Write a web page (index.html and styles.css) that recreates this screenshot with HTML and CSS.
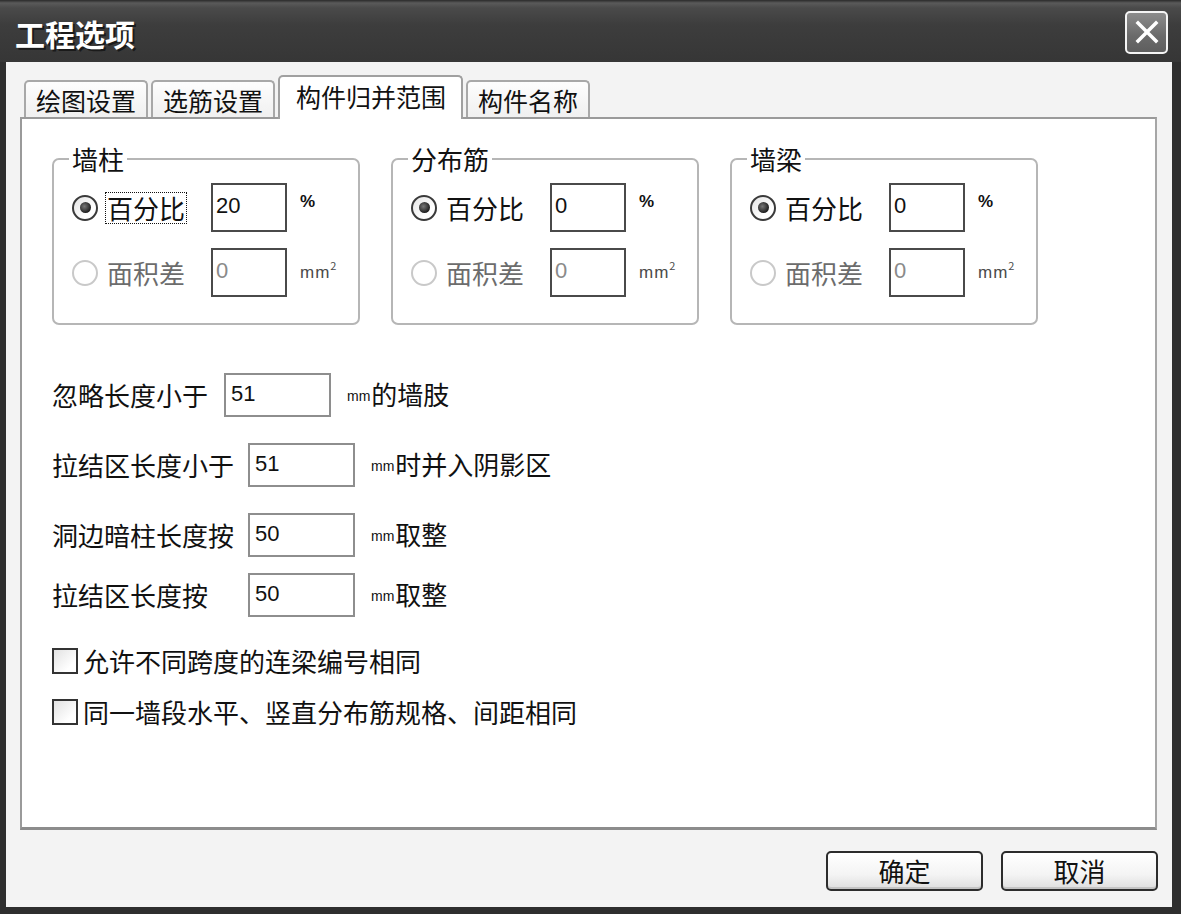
FILE: index.html
```html
<!DOCTYPE html>
<html lang="zh-CN">
<head>
  <meta charset="UTF-8" />
  <title>工程选项</title>
  <link rel="stylesheet" href="styles.css">
</head>
<body>

<div class="window">
  <!-- title bar -->
  <div class="titlebar">
    <span class="title">工程选项</span>
    <button class="close" title="关闭">
      <svg width="26" height="26" viewBox="0 0 26 26">
        <path d="M4 4 L22 22 M22 4 L4 22" stroke="#fff" stroke-width="3.5" stroke-linecap="square" fill="none" />
      </svg>
    </button>
  </div>

  <div class="client">
    <div class="tabs">
      <div class="tab">绘图设置</div>
      <div class="tab">选筋设置</div>
      <div class="tab active">构件归并范围</div>
      <div class="tab">构件名称</div>
    </div>

    <div class="panel">
      <div class="groups">
        <fieldset class="group">
          <legend>墙柱</legend>
          <div class="opt">
            <span class="radio checked"></span>
            <span class="opt-label"><span class="focus">百分比</span></span>
            <input class="field" type="text" value="20" readonly>
            <span class="unit pct">%</span>
          </div>
          <div class="opt disabled">
            <span class="radio"></span>
            <span class="opt-label">面积差</span>
            <input class="field" type="text" value="0" readonly>
            <span class="unit area">mm<sup>2</sup></span>
          </div>
        </fieldset>

        <fieldset class="group">
          <legend>分布筋</legend>
          <div class="opt">
            <span class="radio checked"></span>
            <span class="opt-label">百分比</span>
            <input class="field" type="text" value="0" readonly>
            <span class="unit pct">%</span>
          </div>
          <div class="opt disabled">
            <span class="radio"></span>
            <span class="opt-label">面积差</span>
            <input class="field" type="text" value="0" readonly>
            <span class="unit area">mm<sup>2</sup></span>
          </div>
        </fieldset>

        <fieldset class="group">
          <legend>墙梁</legend>
          <div class="opt">
            <span class="radio checked"></span>
            <span class="opt-label">百分比</span>
            <input class="field" type="text" value="0" readonly>
            <span class="unit pct">%</span>
          </div>
          <div class="opt disabled">
            <span class="radio"></span>
            <span class="opt-label">面积差</span>
            <input class="field" type="text" value="0" readonly>
            <span class="unit area">mm<sup>2</sup></span>
          </div>
        </fieldset>
      </div>

      <div class="limits">
        <div class="limit short">
          <span class="limit-label">忽略长度小于</span>
          <input class="box" type="text" value="51" readonly>
          <span class="limit-unit"><small>mm</small>的墙肢</span>
        </div>
        <div class="limit">
          <span class="limit-label">拉结区长度小于</span>
          <input class="box" type="text" value="51" readonly>
          <span class="limit-unit"><small>mm</small>时并入阴影区</span>
        </div>
        <div class="limit">
          <span class="limit-label">洞边暗柱长度按</span>
          <input class="box" type="text" value="50" readonly>
          <span class="limit-unit"><small>mm</small>取整</span>
        </div>
        <div class="limit tight">
          <span class="limit-label">拉结区长度按</span>
          <input class="box" type="text" value="50" readonly>
          <span class="limit-unit"><small>mm</small>取整</span>
        </div>
      </div>

      <div class="checks">
        <label class="check"><span class="checkbox"></span>允许不同跨度的连梁编号相同</label>
        <label class="check"><span class="checkbox"></span>同一墙段水平、竖直分布筋规格、间距相同</label>
      </div>
    </div>

    <div class="actions">
      <button class="btn">确定</button>
      <button class="btn">取消</button>
    </div>
  </div>
</div>

</body>
</html>
```

FILE: styles.css
```css
:root {
  --frame: #2e2e2e;
  --face: #f3f3f3;
  --text: #111111;
  --muted: #6c6c6c;
  --edge: #9a9a9a;
}

* {
  box-sizing: border-box;
  margin: 0;
  padding: 0;
  font-family: "Noto Sans CJK SC", "Noto Sans", sans-serif;
}

body {
  background: var(--frame);
  color: var(--text);
}

.window {
  width: 1181px;
  height: 914px;
  display: flex;
  flex-direction: column;
  background: var(--frame);
}

/* title bar */
.titlebar {
  height: 62px;
  flex: none;
  display: flex;
  align-items: center;
  justify-content: space-between;
  padding: 0 13px 0 15px;
  background: linear-gradient(#2a2a2a 0, #5a5a5a 3px, #4a4a4a 8px, #3d3d3d 40%, #363636 100%);
}

.title {
  color: #fff;
  font-size: 30px;
  font-weight: 700;
  line-height: 1;
  text-shadow: 2px 2px 0 #1a1a1a;
  margin-top: 4px;
}

.close {
  width: 43px;
  height: 43px;
  border: 2px solid #f4f4f4;
  border-radius: 5px;
  background: linear-gradient(#8c8c8c, #6a6a6a 60%, #5e5e5e);
  display: flex;
  align-items: center;
  justify-content: center;
  margin-top: 2px;
}

/* client area */
.client {
  flex: 1;
  display: flex;
  flex-direction: column;
  margin: 0 9px 7px 6px;
  padding: 13px 15px 0 14px;
  background: var(--face);
}

.tabs {
  display: flex;
  align-items: flex-end;
  gap: 3px;
  height: 44px;
  margin: 0 0 -2px 4px;
  position: relative;
  z-index: 1;
}

.tab {
  height: 37px;
  margin-bottom: 2px;
  padding: 0 10px;
  font-size: 25px;
  line-height: 36px;
  background: linear-gradient(#fdfdfd, #f0f0f0);
  border: 2px solid #a8a8a8;
  border-bottom: none;
  border-radius: 5px 5px 0 0;
  white-space: nowrap;
}

.tab.active {
  height: 44px;
  margin-bottom: 0;
  padding: 0 15px 0 16px;
  line-height: 38px;
  background: #fff;
  border-color: #a0a0a0;
}

.panel {
  flex: 1;
  background: #fff;
  border: 2px solid var(--edge);
  border-bottom: 3px solid #8c8c8c;
  border-right-color: #a6a6a6;
  padding: 27px 0 0 30px;
}

/* group boxes */
.groups {
  display: flex;
  gap: 31px;
}

.group {
  width: 308px;
  min-inline-size: 0;
  border: 2px solid #b6b6b6;
  border-radius: 7px;
  padding: 11px 0 26px 18px;
  display: flex;
  flex-direction: column;
  gap: 16px;
}

.group legend {
  font-size: 26px;
  line-height: 26px;
  padding: 0 3px;
  margin-left: -3px;
}

.opt {
  display: flex;
  align-items: center;
  height: 49px;
}

.radio {
  width: 26px;
  height: 26px;
  flex: none;
  border-radius: 50%;
  border: 2px solid #3a3a3a;
  background: linear-gradient(135deg, #e4e4e4, #fff 70%);
  display: flex;
  align-items: center;
  justify-content: center;
}

.radio.checked::after {
  content: "";
  width: 11px;
  height: 11px;
  border-radius: 50%;
  background: radial-gradient(circle at 40% 40%, #777, #1e1e1e 70%);
}

.opt-label {
  width: 104px;
  margin-left: 9px;
  font-size: 26px;
  line-height: 26px;
  white-space: nowrap;
}

.focus {
  display: inline-block;
  margin-left: -2px;
  padding: 2px 1px;
  border: 1px dotted #111;
}

.field {
  width: 76px;
  height: 49px;
  flex: none;
  border: 2px solid #4a4a4a;
  background: #fff;
  padding: 0 0 3px 3px;
  font-family: "Liberation Sans", sans-serif;
  font-size: 22px;
  color: var(--text);
  outline: none;
}

.unit {
  align-self: flex-start;
  margin-left: 13px;
  font-family: "Liberation Sans", sans-serif;
  font-weight: 700;
  line-height: 1;
}

.unit.pct {
  font-size: 17px;
  padding-top: 10px;
}

.unit.area {
  font-size: 17px;
  font-weight: 400;
  color: #4a4a4a;
  padding-top: 12px;
  letter-spacing: 1px;
}

.unit.area sup {
  font-size: 11px;
  vertical-align: 8px;
}

.opt.disabled .radio {
  border-color: #c9c9c9;
  background: #fff;
}

.opt.disabled .opt-label {
  color: var(--muted);
}

.opt.disabled .field {
  color: #8a8a8a;
}

/* length limits */
.limits {
  display: flex;
  flex-direction: column;
  gap: 26px;
  margin-top: 48px;
}

.limit {
  display: flex;
  align-items: center;
  height: 44px;
}

.limit.tight {
  margin-top: -10px;
}

.limit-label {
  width: 196px;
  flex: none;
  font-size: 26px;
  line-height: 26px;
  white-space: nowrap;
}

.limit.short .limit-label {
  width: 172px;
}

.box {
  width: 107px;
  height: 44px;
  flex: none;
  border: 2px solid #8e8e8e;
  background: #fff;
  padding: 0 0 2px 5px;
  font-family: "Liberation Sans", sans-serif;
  font-size: 22px;
  color: var(--text);
  outline: none;
}

.limit-unit {
  margin-left: 16px;
  font-size: 26px;
  line-height: 26px;
  white-space: nowrap;
}

.limit-unit small {
  font-family: "Liberation Sans", sans-serif;
  font-size: 14px;
  vertical-align: 4px;
  margin-right: 1px;
}

/* check boxes */
.checks {
  display: flex;
  flex-direction: column;
  gap: 25px;
  margin-top: 31px;
}

.check {
  display: flex;
  align-items: center;
  gap: 5px;
  font-size: 26px;
  line-height: 26px;
  white-space: nowrap;
}

.checkbox {
  width: 26px;
  height: 26px;
  flex: none;
  border: 2px solid #333;
  background: linear-gradient(135deg, #e2e2e2, #fff 75%);
}

/* dialog buttons */
.actions {
  display: flex;
  justify-content: flex-end;
  gap: 18px;
  padding: 21px 0 16px;
  margin-right: -1px;
}

.btn {
  width: 157px;
  height: 40px;
  border: 2px solid #2c2c2c;
  border-radius: 5px;
  background: linear-gradient(#ffffff, #f4f4f4 60%, #dedede);
  box-shadow: inset 0 -2px 0 #c4c4c4;
  font-size: 26px;
  line-height: 1;
  color: var(--text);
}
```
